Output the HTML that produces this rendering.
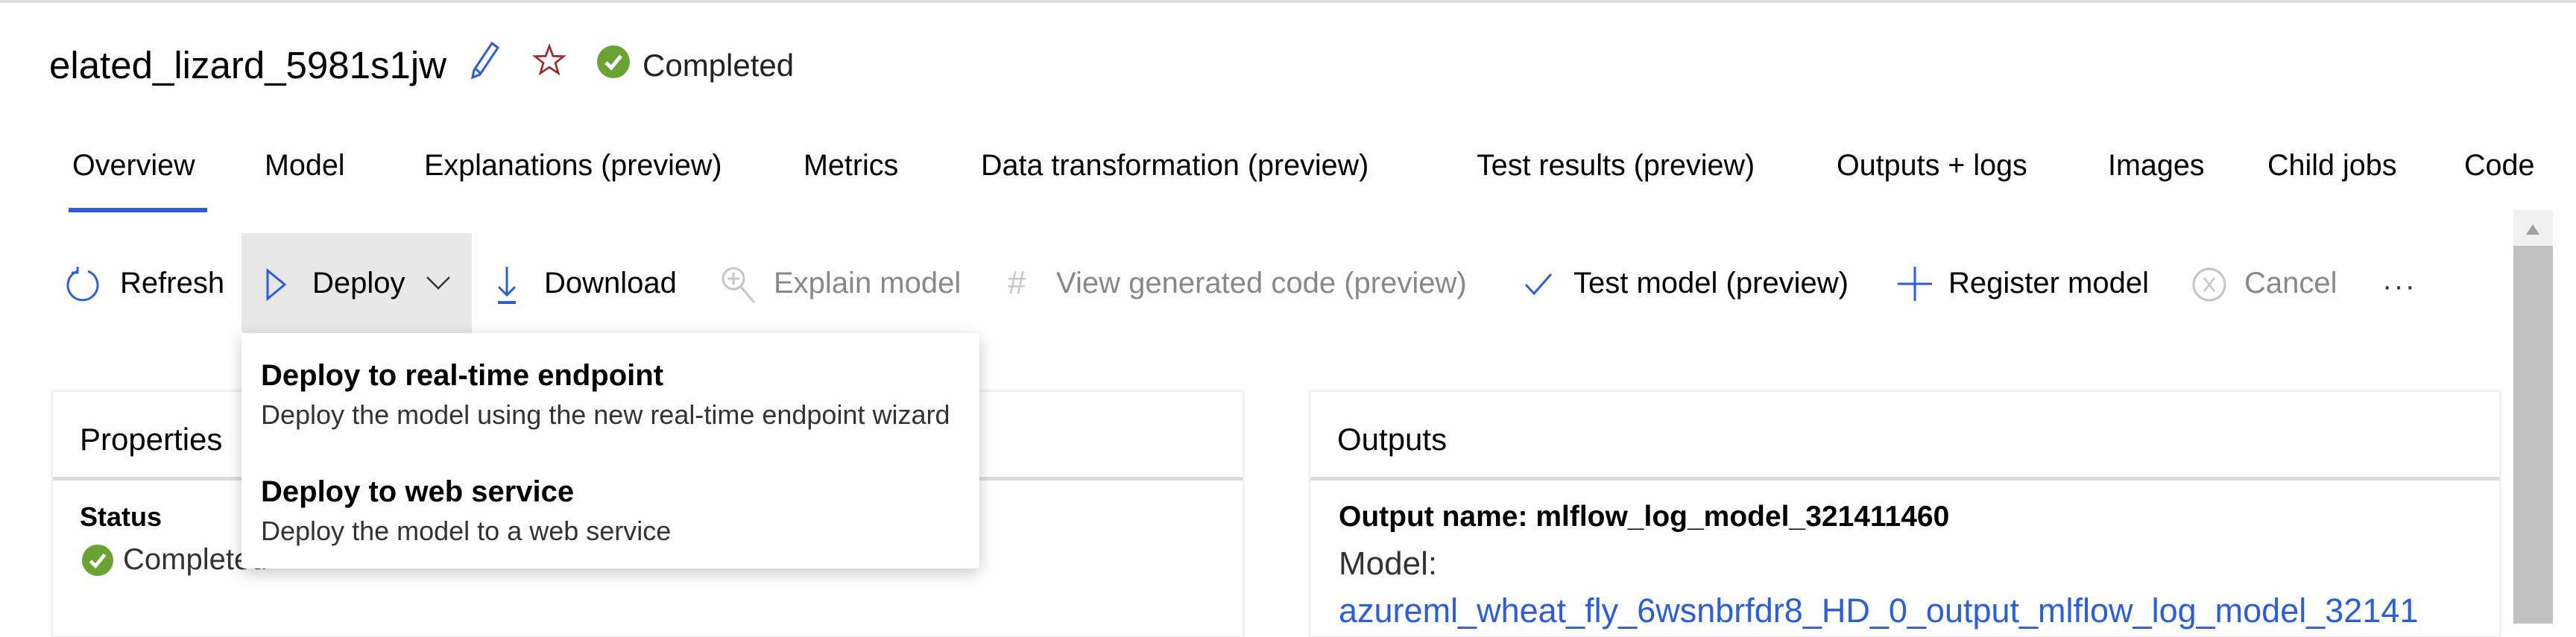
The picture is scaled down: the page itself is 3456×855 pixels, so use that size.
<!DOCTYPE html>
<html><head><meta charset="utf-8"><style>
*{margin:0;padding:0;box-sizing:border-box}
body{width:3456px;height:837px;overflow:hidden;background:#fff;font-family:"Liberation Sans",sans-serif;color:#000;position:relative}
.a{position:absolute;white-space:nowrap}
.tab{position:absolute;top:197px;font-size:39.5px;line-height:50px}
.tb{position:absolute;top:355px;font-size:40px;line-height:50px}
.g{color:#8a8886}
.card{position:absolute;top:525px;height:330px;background:#fff;box-shadow:0 0 4px rgba(0,0,0,.15);border:1px solid #eee}
.div{position:absolute;left:0;right:0;top:114px;height:5px;background:#dcdcdc}
</style></head><body>
<div class="a" style="left:0;top:0;width:3456px;height:4px;background:#ddd"></div>
<div class="a" style="left:66px;top:58px;font-size:51px;line-height:60px">elated_lizard_5981s1jw</div>
<svg class="a" style="left:630px;top:54px" width="46" height="54" viewBox="0 0 46 54"><path d="M30 4 L38 10 L14 46 L4 50 L6 40 Z M8 38 L14 44" fill="none" stroke="#2b5ed8" stroke-width="3"/></svg>
<svg class="a" style="left:714px;top:58px" width="46" height="46" viewBox="0 0 24 24"><path d="M12 2 L14.6 9 L22 9.2 L16.2 13.8 L18.3 21 L12 16.8 L5.7 21 L7.8 13.8 L2 9.2 L9.4 9 Z" fill="none" stroke="#a4262c" stroke-width="1.4"/></svg>
<svg class="a" style="left:800px;top:60px" width="46" height="46" viewBox="0 0 46 46"><circle cx="23" cy="23" r="22" fill="#6aa334"/><path d="M13 24 L20 31 L33 15" fill="none" stroke="#fff" stroke-width="5"/></svg>
<div class="a" style="left:862px;top:60px;font-size:42px;line-height:56px;color:#222">Completed</div>

<div class="tab" style="left:97px">Overview</div>
<div class="a" style="left:92px;top:279px;width:186px;height:6px;background:#2b5ed8"></div>
<div class="tab" style="left:355px">Model</div>
<div class="tab" style="left:569px">Explanations (preview)</div>
<div class="tab" style="left:1078px">Metrics</div>
<div class="tab" style="left:1316px">Data transformation (preview)</div>
<div class="tab" style="left:1981px">Test results (preview)</div>
<div class="tab" style="left:2464px">Outputs + logs</div>
<div class="tab" style="left:2828px">Images</div>
<div class="tab" style="left:3042px">Child jobs</div>
<div class="tab" style="left:3306px">Code</div>

<div class="a" style="left:324px;top:313px;width:309px;height:134px;background:#e8e8e8"></div>
<svg class="a" style="left:86px;top:356px" width="50" height="50" viewBox="0 0 50 50"><path d="M18 8 A20 20 0 1 0 32 8" fill="none" stroke="#2b5ed8" stroke-width="3"/><path d="M18 2 L18 10 L10 10" fill="none" stroke="#2b5ed8" stroke-width="3"/></svg>
<div class="tb" style="left:161px">Refresh</div>
<svg class="a" style="left:356px;top:360px" width="30" height="44" viewBox="0 0 30 44"><path d="M3 3 L26 22 L3 41 Z" fill="none" stroke="#2b5ed8" stroke-width="3"/></svg>
<div class="tb" style="left:419px">Deploy</div>
<svg class="a" style="left:570px;top:368px" width="36" height="24" viewBox="0 0 36 24"><path d="M3 4 L18 19 L33 4" fill="none" stroke="#333" stroke-width="2.5"/></svg>
<svg class="a" style="left:664px;top:356px" width="32" height="54" viewBox="0 0 32 54"><path d="M16 2 L16 40 M5 29 L16 40 L27 29" fill="none" stroke="#2b5ed8" stroke-width="3"/><path d="M4 50 L28 50" stroke="#2b5ed8" stroke-width="4"/></svg>
<div class="tb" style="left:730px">Download</div>
<svg class="a" style="left:966px;top:356px" width="50" height="54" viewBox="0 0 50 54"><circle cx="18" cy="18" r="14" fill="none" stroke="#c8c6c4" stroke-width="3"/><path d="M28 29 L46 50 M18 10 L18 26 M10 18 L26 18" stroke="#c8c6c4" stroke-width="3"/></svg>
<div class="tb g" style="left:1038px">Explain model</div>
<div class="tb" style="left:1352px;color:#c8c6c4;font-size:44px">#</div>
<div class="tb g" style="left:1417px">View generated code (preview)</div>
<svg class="a" style="left:2044px;top:364px" width="40" height="36" viewBox="0 0 40 36"><path d="M3 18 L14 30 L37 4" fill="none" stroke="#2b5ed8" stroke-width="3"/></svg>
<div class="tb" style="left:2111px">Test model (preview)</div>
<svg class="a" style="left:2544px;top:356px" width="50" height="50" viewBox="0 0 50 50"><path d="M25 2 L25 48 M2 25 L48 25" stroke="#2b5ed8" stroke-width="3"/></svg>
<div class="tb" style="left:2614px">Register model</div>
<svg class="a" style="left:2940px;top:358px" width="48" height="48" viewBox="0 0 48 48"><circle cx="24" cy="24" r="21" fill="none" stroke="#c8c6c4" stroke-width="3"/><path d="M17 15 L31 33 M31 15 L17 33" stroke="#c8c6c4" stroke-width="2.5"/></svg>
<div class="tb g" style="left:3011px">Cancel</div>
<div class="a" style="left:3196px;top:362px;font-size:40px;letter-spacing:2px;color:#333">···</div>

<div class="a" style="left:3372px;top:282px;width:53px;height:555px;background:#c1c1c1"></div>
<div class="a" style="left:3372px;top:282px;width:53px;height:48px;background:#f0f0f0"></div>
<svg class="a" style="left:3388px;top:300px" width="20" height="16" viewBox="0 0 20 16"><path d="M10 1 L19 15 L1 15 Z" fill="#a0a0a0"/></svg>

<div class="card" style="left:70px;width:1598px">
  <div class="a" style="left:36px;top:36px;font-size:42px;line-height:56px">Properties</div>
  <div class="div"></div>
  <div class="a" style="left:36px;top:144px;font-size:36px;font-weight:bold;line-height:48px">Status</div>
  <svg class="a" style="left:38px;top:204px" width="44" height="44" viewBox="0 0 46 46"><circle cx="23" cy="23" r="22" fill="#6aa334"/><path d="M13 24 L20 31 L33 15" fill="none" stroke="#fff" stroke-width="5"/></svg>
  <div class="a" style="left:94px;top:200px;font-size:40px;line-height:50px;color:#333">Completed</div>
</div>
<div class="card" style="left:1757px;width:1597px">
  <div class="a" style="left:36px;top:36px;font-size:42px;line-height:56px">Outputs</div>
  <div class="div"></div>
  <div class="a" style="left:38px;top:144px;font-size:39px;font-weight:bold;line-height:48px">Output name: mlflow_log_model_321411460</div>
  <div class="a" style="left:38px;top:204px;font-size:44px;line-height:54px;color:#333">Model:</div>
  <div class="a" style="left:38px;top:266px;font-size:45px;line-height:56px;color:#2b5ed8">azureml_wheat_fly_6wsnbrfdr8_HD_0_output_mlflow_log_model_32141</div>
</div>

<div class="a" style="left:324px;top:447px;width:990px;height:316px;background:#fff;border-radius:4px;box-shadow:0 6px 20px rgba(0,0,0,.22)">
  <div class="a" style="left:26px;top:32px;font-size:40px;font-weight:bold;line-height:50px">Deploy to real-time endpoint</div>
  <div class="a" style="left:26px;top:88px;font-size:36px;line-height:44px;color:#333">Deploy the model using the new real-time endpoint wizard</div>
  <div class="a" style="left:26px;top:188px;font-size:40px;font-weight:bold;line-height:50px">Deploy to web service</div>
  <div class="a" style="left:26px;top:244px;font-size:36px;line-height:44px;color:#333">Deploy the model to a web service</div>
</div>
</body></html>
